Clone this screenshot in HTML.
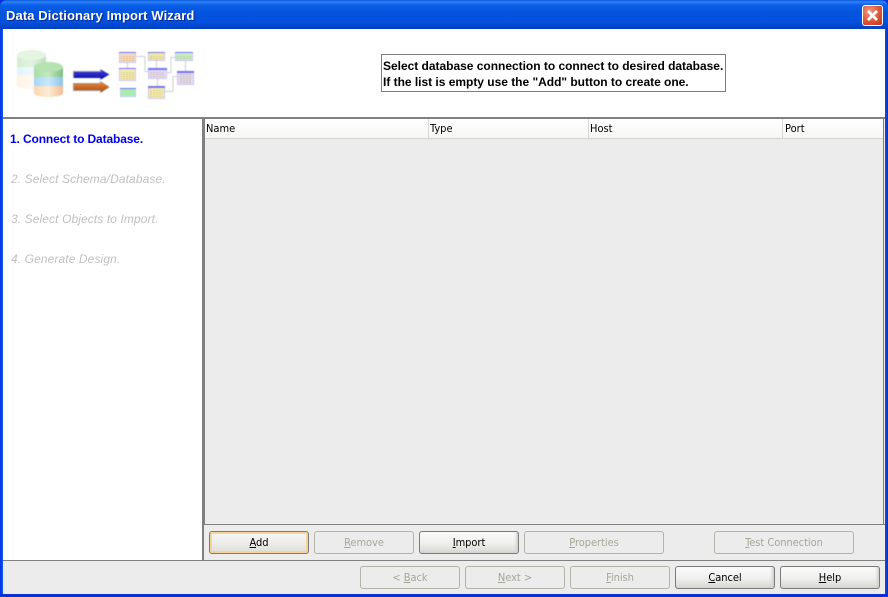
<!DOCTYPE html>
<html><head><meta charset="utf-8"><style>
html,body{margin:0;padding:0;width:888px;height:597px;overflow:hidden;background:#0831d9}
.a{position:absolute;white-space:nowrap}
#win{position:absolute;left:0;top:0;width:888px;height:597px;overflow:hidden}
.btn{position:absolute;box-sizing:border-box;width:100px;height:23px;border:1px solid #7a7a7a;border-radius:3px;background:linear-gradient(#fbfbfb,#f0f0ee 50%,#d8d8d4);box-shadow:inset -2px -1px 2px #d2d2ce;font:11px/21px "DejaVu Sans Condensed","DejaVu Sans",sans-serif;font-stretch:condensed;letter-spacing:-.05px;text-align:center;color:#000}
.btn.d{border-color:#b3b3a6;background:#ececec;box-shadow:none;color:#a6a699}
.btn.f{background:linear-gradient(#f6f6f4,#ececea 55%,#dcdcd8);box-shadow:inset 0 0 0 2px #f6d39a,inset 0 -2px 0 0 #e8a848}
u{text-underline-offset:1px}
.th{position:absolute;top:119px;height:19px;font:11px/20px "DejaVu Sans Condensed","DejaVu Sans",sans-serif;font-stretch:condensed;color:#000;padding-left:2px;box-sizing:border-box;border-right:1px solid #d8d8d4}
.s{position:absolute;left:11px;font:italic 12px/14px "Liberation Sans",sans-serif;color:#c0c0c0;letter-spacing:.1px}
</style></head><body><div id="win">
<div class="a" style="left:0;top:0;width:888px;height:29px;border-radius:7px 7px 0 0;background:linear-gradient(#0a5ae0 0,#2f83f5 2px,#0a5fe8 5px,#0352dc 14px,#0450df 22px,#0344c8 27px,#0240b8 29px)"></div>
<div class="a" style="left:0;top:29px;width:3px;height:568px;background:linear-gradient(90deg,#0831d9,#0a5af0)"></div>
<div class="a" style="left:885px;top:29px;width:3px;height:568px;background:linear-gradient(90deg,#0a50e0,#0831c9)"></div>
<div class="a" style="left:0;top:594px;width:888px;height:3px;background:#0831d9"></div>
<div class="a" style="left:6px;top:8px;font:bold 13px/16px 'Liberation Sans',sans-serif;letter-spacing:.1px;color:#fff;text-shadow:1px 1px 0 #0a2a90">Data Dictionary Import Wizard</div>
<div class="a" style="left:862px;top:5px;width:21px;height:21px;box-sizing:border-box;border:1px solid #fff;border-radius:3px;background:radial-gradient(circle at 35% 30%,#f09a7e,#d8512f 60%,#b93a1e)">
<svg width="19" height="19" style="display:block"><path d="M5 5L14 14M14 5L5 14" stroke="#fff" stroke-width="2.800"/></svg></div>

<div class="a" style="left:3px;top:29px;width:882px;height:565px;background:#ececec"></div>
<div class="a" style="left:3px;top:29px;width:882px;height:88px;background:#fff"></div>
<svg class="a" style="left:0;top:0;filter:blur(.4px)" width="210" height="117" viewBox="0 0 210 117">
<defs>
<linearGradient id="g" x1="0" x2="1" y1="0" y2="0"><stop offset="0" stop-color="#a9dca6"/><stop offset=".5" stop-color="#c3eac0"/><stop offset="1" stop-color="#7fbd84"/></linearGradient>
<linearGradient id="b" x1="0" x2="1" y1="0" y2="0"><stop offset="0" stop-color="#a5d6f7"/><stop offset=".5" stop-color="#c8e8fc"/><stop offset="1" stop-color="#8fc4ea"/></linearGradient>
<linearGradient id="o" x1="0" x2="1" y1="0" y2="0"><stop offset="0" stop-color="#fbd7ae"/><stop offset=".5" stop-color="#fdebd8"/><stop offset="1" stop-color="#f0bd90"/></linearGradient>
<linearGradient id="ab" x1="0" x2="0" y1="0" y2="1"><stop offset="0" stop-color="#3c3cf0"/><stop offset="1" stop-color="#10109a"/></linearGradient>
<linearGradient id="ao" x1="0" x2="0" y1="0" y2="1"><stop offset="0" stop-color="#f08a3a"/><stop offset="1" stop-color="#a84a10"/></linearGradient>
<pattern id="h" width="3" height="2" patternUnits="userSpaceOnUse"><rect width="2" height="1" fill="#b8a060" opacity=".55"/></pattern>
</defs>
<g opacity=".5">
<path d="M17 55v12h29V55z" fill="url(#g)"/><path d="M17 67v8h29v-8z" fill="url(#b)" opacity=".6"/><path d="M17 75v10a14.500 4 0 0 0 29 0V75z" fill="url(#o)" opacity=".7"/>
<ellipse cx="31.500" cy="55" rx="14.500" ry="5" fill="#c9ecc6"/></g>
<path d="M34 67v11h29V67z" fill="url(#g)"/><path d="M34 77v10h29V77z" fill="url(#b)"/><path d="M34 86v7a14.500 4 0 0 0 29 0v-7z" fill="url(#o)"/>
<ellipse cx="48.500" cy="67" rx="14.500" ry="5" fill="#b4e2b0"/>
<path d="M73 71h27v-2l10 5.500-10 5.500v-2H73z" fill="#9a9a9a"/>
<path d="M74 72h27v-2.500l8 5-8 5V78H74z" fill="url(#ab)"/>
<path d="M73 83h27v-2l10 6-10 6v-2H73z" fill="#9a9a9a"/>
<path d="M74 84h27v-2.500l8 5.500-8 5.500V90H74z" fill="url(#ao)"/>
<g fill="none" stroke="#cfcfcf" stroke-width="1">
<path d="M136 56.500h9v15h3M127.500 63v5M156.500 61v7M157.500 79v7M167 72.500h4v-15h4M185.500 61v10M165 91.500h8v-15h4"/>
</g>
<g stroke="#c9c6f7" stroke-width="1">
<rect x="119.500" y="52.500" width="16" height="10" fill="#f7dcc0"/>
<rect x="119.500" y="68.500" width="16" height="12" fill="#f5eeb0"/>
<rect x="120.500" y="88.500" width="15" height="8" fill="#a6eeb0"/>
<rect x="148.500" y="52.500" width="16" height="8" fill="#f1eca8"/>
<rect x="148.500" y="68.500" width="18" height="10" fill="#e5dcfb"/>
<rect x="148.500" y="86.500" width="16" height="12" fill="#f7f0b0"/>
<rect x="175.500" y="52.500" width="17" height="8" fill="#c4f0cc"/>
<rect x="177.500" y="71.500" width="16" height="13" fill="#e2dcfa"/>
</g>
<g fill="url(#h)">
<rect x="121" y="55" width="13" height="6"/><rect x="121" y="71" width="13" height="8"/><rect x="150" y="55" width="13" height="4"/><rect x="150" y="71" width="15" height="6"/><rect x="150" y="89" width="13" height="8"/><rect x="177" y="55" width="14" height="4"/><rect x="179" y="74" width="13" height="9"/>
</g>
<g fill="#5c5cf0" opacity=".8">
<rect x="119" y="52" width="17" height="1"/><rect x="148" y="52" width="17" height="1"/><rect x="175" y="52" width="18" height="1"/><rect x="148" y="68" width="19" height="2"/><rect x="148" y="86" width="17" height="2"/><rect x="177" y="71" width="17" height="2"/><rect x="120" y="88" width="16" height="1"/><rect x="119" y="68" width="17" height="1"/>
</g>
</svg>
<div class="a" style="left:381px;top:54px;width:345px;height:38px;box-sizing:border-box;border:1px solid #7f7f7f;background:#fff;font:bold 12px/16px 'Liberation Sans',sans-serif;color:#000;padding:3px 0 0 1px;letter-spacing:-.02px">Select database connection to connect to desired database.<br>If the list is empty use the "Add" button to create one.</div>

<div class="a" style="left:3px;top:117px;width:882px;height:2px;background:#808080"></div>
<div class="a" style="left:3px;top:119px;width:199px;height:441px;background:#fff"></div>
<div class="a" style="left:202px;top:119px;width:3px;height:405px;background:#808080"></div>
<div class="a" style="left:202px;top:524px;width:2px;height:36px;background:#808080"></div>
<div class="a" style="left:3px;top:560px;width:882px;height:1px;background:#808080"></div>
<div class="a" style="left:204px;top:524px;width:681px;height:1px;background:#808080"></div>
<div class="a" style="left:883px;top:119px;width:1px;height:405px;background:#808080"></div>
<div class="a" style="left:205px;top:119px;width:678px;height:19px;background:linear-gradient(#fff,#f6f6f4)"></div>
<div class="a" style="left:205px;top:138px;width:678px;height:1px;background:#d4d4d0"></div>
<div class="th" style="left:205px;width:224px;padding-left:1px">Name</div>
<div class="th" style="left:429px;width:160px;padding-left:1px">Type</div>
<div class="th" style="left:589px;width:194px;padding-left:1px">Host</div>
<div class="th" style="left:783px;width:100px;border:0;padding-left:2px">Port</div>

<div class="a" style="left:10px;top:132px;font:bold 12px/14px 'Liberation Sans',sans-serif;color:#0000f0;letter-spacing:-.13px">1. Connect to Database.</div>
<div class="s" style="top:172px">2. Select Schema/Database.</div>
<div class="s" style="top:212px">3. Select Objects to Import.</div>
<div class="s" style="top:252px">4. Generate Design.</div>

<div class="btn f" style="left:209px;top:531px"><u>A</u>dd</div>
<div class="btn d" style="left:314px;top:531px"><u>R</u>emove</div>
<div class="btn" style="left:419px;top:531px"><u>I</u>mport</div>
<div class="btn d" style="left:524px;top:531px;width:140px"><u>P</u>roperties</div>
<div class="btn d" style="left:714px;top:531px;width:140px"><u>T</u>est Connection</div>
<div class="btn d" style="left:360px;top:566px">&lt; <u>B</u>ack</div>
<div class="btn d" style="left:465px;top:566px"><u>N</u>ext &gt;</div>
<div class="btn d" style="left:570px;top:566px"><u>F</u>inish</div>
<div class="btn" style="left:675px;top:566px"><u>C</u>ancel</div>
<div class="btn" style="left:780px;top:566px"><u>H</u>elp</div>
</div></body></html>
